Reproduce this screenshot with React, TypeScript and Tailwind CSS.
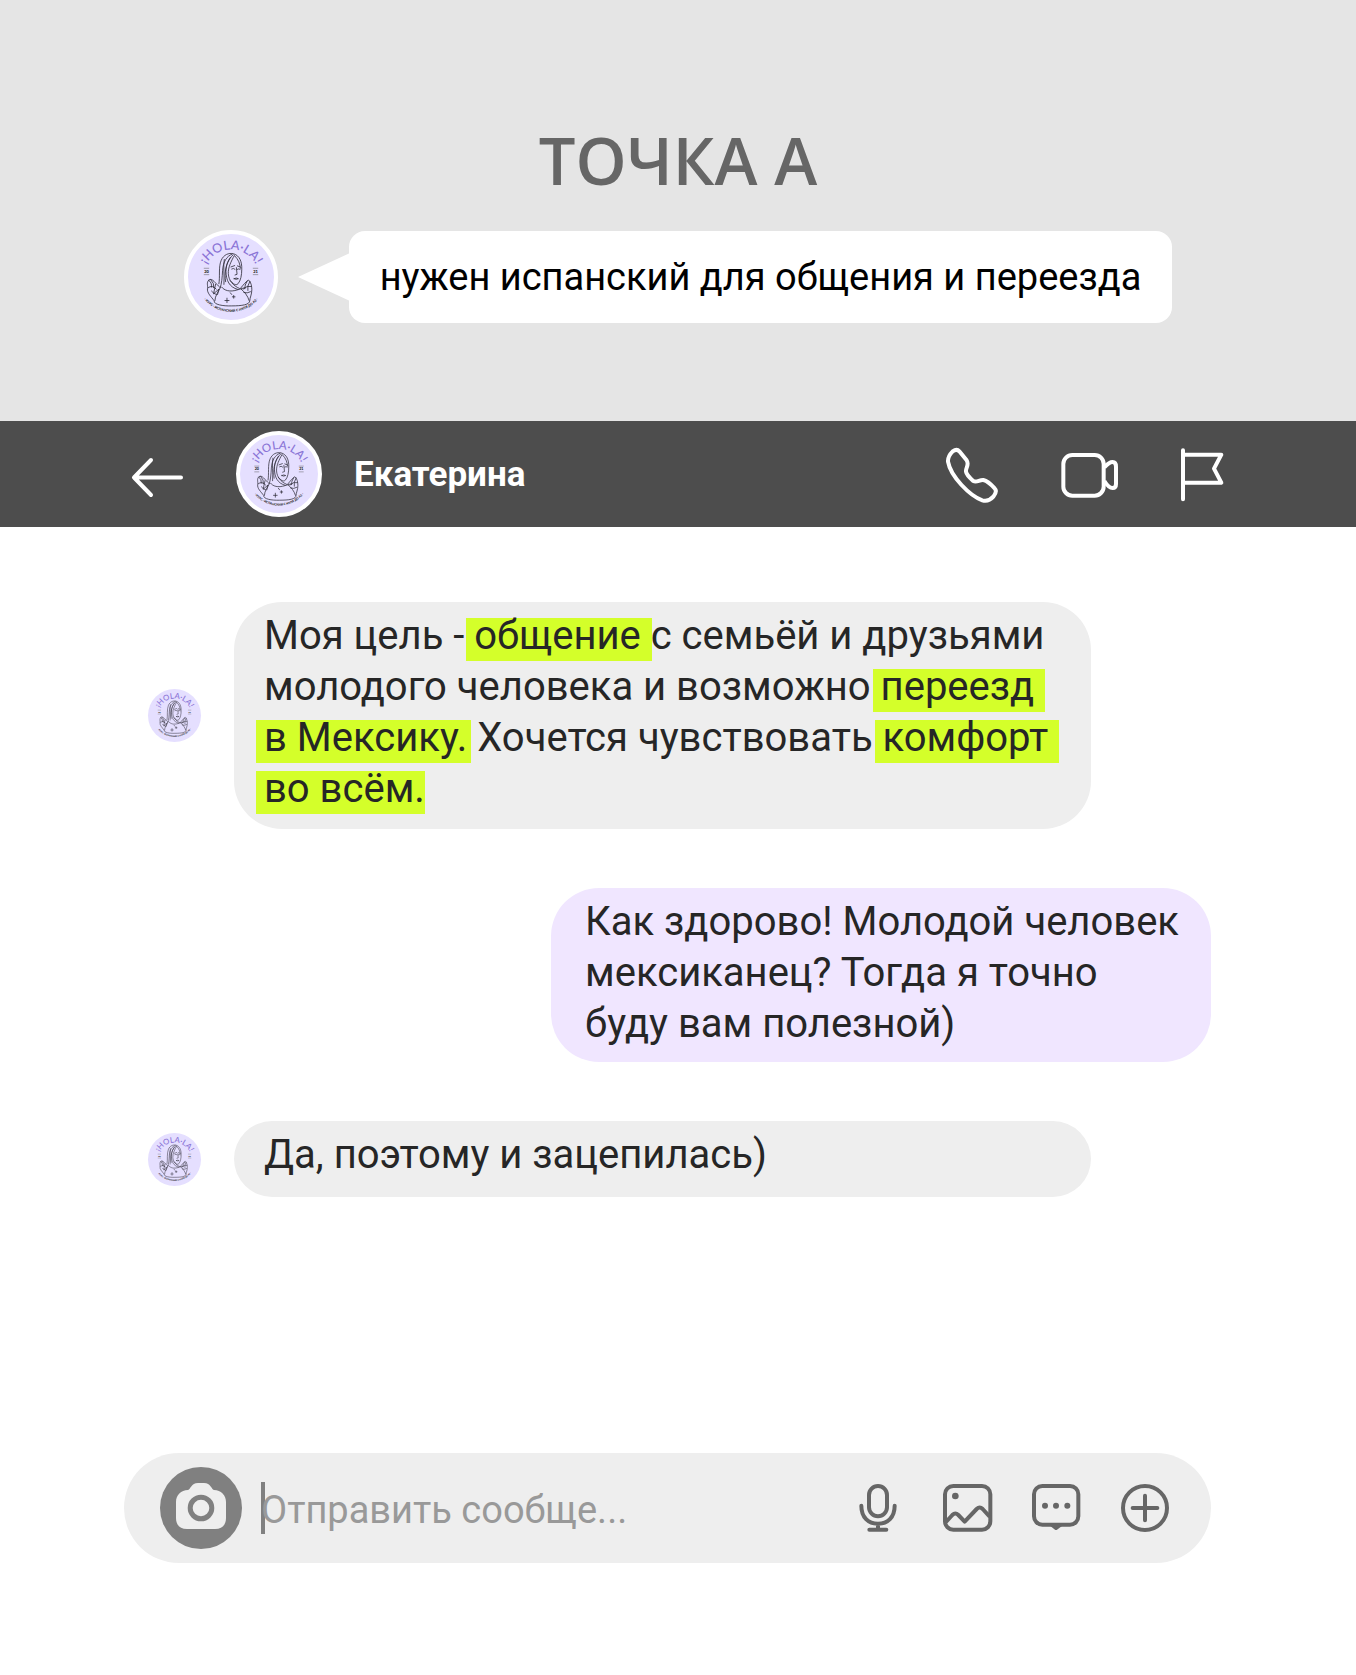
import { useId } from 'react';
import type { ReactNode } from 'react';

interface AvatarProps {
  className?: string;
}

function Avatar({ className = '' }: AvatarProps) {
  const id = useId();

  return (
    <svg viewBox="0 0 256 256" className={`shrink-0 rounded-full bg-[#e5dfff] ${className}`} role="img" aria-label="¡HOLA·LA!">
      <defs>
        <path id={`${id}-top`} d="M46 128 A82 82 0 0 1 210 128" />
        <path id={`${id}-bottom`} d="M24 128 A104 104 0 0 0 232 128" />
      </defs>

      <text fill="#8a74d6" fontSize="38" textAnchor="middle" className="font-['Lato'] font-medium">
        <textPath href={`#${id}-top`} startOffset="50%">¡HOLA·LA!</textPath>
      </text>
      <text fill="#222" fontSize="10" textAnchor="middle" className="font-['Lato'] font-black">
        <textPath href={`#${id}-bottom`} startOffset="50%">· КУРС · ИСПАНСКИЙ С НУЛЯ ДО А2 ·</textPath>
      </text>

      {/* year */}
      <g fill="#222" fontSize="12" textAnchor="middle" className="font-['Lato'] font-black">
        <text x="55" y="116">20</text>
        <text x="201" y="116">21</text>
      </g>
      <path d="M47 102h16M47 121h16M193 102h16M193 121h16" stroke="#555" strokeWidth="1.500" />

      {/* girl */}
      <g fill="none" stroke="#2c2a35" strokeWidth="2.400" strokeLinecap="round" strokeLinejoin="round">
        <path d="M92 148C96 128 90 98 99 78C106 62 121 55 136 59C153 64 161 82 160 105C160 122 157 139 149 148C142 155 134 148 126 139" />
        <path d="M131 60C115 66 105 82 103 108C102 130 100 148 96 160" />
        <path d="M134 62C120 76 113 92 113 112C114 138 122 158 148 165" />
        <path d="M138 64C128 82 119 100 120 118C121 138 134 154 153 162" />
        <path d="M140 66C150 76 155 88 156 102" />
        <path d="M108 76C104 96 109 124 107 150M126 70C112 90 108 116 112 142" />
        <path d="M128 98L139 94M147 95L155 98M130 104Q135 100 140 105M147 105Q151 102 155 105M144 100L146 120L140 122M137 133Q144 129 150 133Q143 137 137 133" />
        <path d="M94 158C82 148 72 129 62 137C54 146 60 153 58 162C56 176 69 186 78 199C76 210 104 215 130 214C160 214 184 211 184 198C184 190 190 180 190 166C190 157 188 142 180 137C172 142 166 150 156 162" />
        <path d="M62 138Q72 145 70 158M68 136Q79 147 77 160M60 160Q72 150 84 164M70 170Q76 178 84 180M82 150L76 178L92 164L88 180" />
        <path d="M176 140Q168 152 169 163M184 141Q175 156 178 168M188 156Q176 152 164 164M166 174Q176 178 186 172" />
        <path d="M96 160C92 170 80 184 80 198M158 164C168 172 178 184 182 198M100 158C108 168 124 174 148 166L168 160" />
        <path d="M116 191V204M110 198H122M136 183V191M132 187H140M126 175L130 180" />
      </g>
    </svg>
  );
}

interface HighlightProps {
  children: ReactNode;
  className?: string;
}

function Highlight({ children, className = '-mr-[11px] pr-[11px]' }: HighlightProps) {
  return (
    <mark className={`-ml-2 inline-block bg-[#d4ff2a] pb-[7px] pl-2 leading-[36px] text-[#262626] ${className}`}>
      {children}
    </mark>
  );
}

function Header() {
  return (
    <header className="flex h-[106px] items-center bg-[#4d4d4d] px-[130px] text-white">
      <button type="button" aria-label="Назад">
        <svg viewBox="0 0 56 48" className="h-12 w-14" fill="none" stroke="currentColor" strokeWidth="4" strokeLinecap="round" strokeLinejoin="round">
          <path d="M51 27.500H4M21 10L4 27.500L21 45" />
        </svg>
      </button>
      <Avatar className="ml-[50px] h-[86px] w-[86px] border-4 border-white" />
      <h2 className="ml-8 pt-0.5 text-[35px] font-bold">Екатерина</h2>

      <div className="ml-auto flex items-center pt-0.5">
        <button type="button" aria-label="Позвонить">
          <svg viewBox="72 108 168 174" className="h-[58px] w-14" fill="none" stroke="currentColor" strokeWidth="12" strokeLinejoin="round">
            <path d="M118 124L140 151C149 164 136 174 138 185C140 196 152 206 160 213C170 219 178 209 190 210C199 212 215 225 224 235C231 242 228 250 220 260C212 269 200 275 187 271C150 258 92 200 84 155C83 141 90 132 98 124C105 119 112 117 118 124Z" />
          </svg>
        </button>
        <button type="button" aria-label="Видеозвонок" className="ml-[60px]">
          <svg viewBox="420 108 180 174" className="h-[58px] w-[60px]" fill="none" stroke="currentColor" strokeWidth="12" strokeLinejoin="round">
            <rect x="430" y="135" width="121" height="122" rx="27" />
            <path d="M553 172C563 161 571 156 578 156C585 156 588 160 588 170V222C588 230 585 234 578 234C570 234 562 228 553 213" />
          </svg>
        </button>
        <button type="button" aria-label="Пожаловаться" className="ml-[60px]">
          <svg viewBox="780 108 138 174" className="h-[58px] w-[46px]" fill="none" stroke="currentColor" strokeWidth="12" strokeLinecap="round" strokeLinejoin="round">
            <path d="M789 121V268M789 134H904L882 176L904 218H789" />
          </svg>
        </button>
      </div>
    </header>
  );
}

function MessageInput() {
  return (
    <form className="flex h-[110px] items-center rounded-full bg-[#eeeeee] pr-10 pl-9 text-[#666666]">
      <button type="button" aria-label="Камера">
        <svg viewBox="0 0 82 82" className="h-[82px] w-[82px]">
          <circle cx="41" cy="41" r="41" fill="#808080" />
          <path d="M28 23C31 22 31 16 38 16H44C51 16 51 22 54 23C61 23 66 28 66 35V51C66 58 62 62 55 62H27C20 62 16 58 16 51V35C16 28 21 23 28 23Z" fill="#eeeeee" />
          <circle cx="41" cy="41" r="10.800" fill="none" stroke="#808080" strokeWidth="5" />
        </svg>
      </button>
      <span className="ml-[19px] h-[52px] w-1 shrink-0 bg-[#808080]" />
      <input
        type="text"
        aria-label="Сообщение"
        placeholder="Отправить сообще..."
        className="-ml-1 min-w-0 flex-1 bg-transparent pt-1 text-[38px] outline-none placeholder:text-[#999999]"
      />

      <div className="flex items-center gap-[37px]">
        <button type="button" aria-label="Голосовое сообщение">
          <svg viewBox="101 126 156 156" className="h-[52px] w-[52px]" fill="none" stroke="currentColor" strokeWidth="12" strokeLinecap="round">
            <rect x="152" y="138" width="54" height="91" rx="27" />
            <path d="M129 197C129 232 150 251 179 251S229 232 229 197M179 251V269M153 269H204" />
          </svg>
        </button>
        <button type="button" aria-label="Фото">
          <svg viewBox="365 126 156 156" className="h-[52px] w-[52px]" fill="none" stroke="currentColor" strokeWidth="12" strokeLinejoin="round">
            <rect x="377" y="138" width="136" height="131" rx="25" />
            <path d="M380 246L399 225Q408 216 417 225L436 245L472 207Q481 198 490 207L511 230" />
            <circle cx="408" cy="168" r="10" fill="currentColor" stroke="none" />
          </svg>
        </button>
        <button type="button" aria-label="Быстрый ответ">
          <svg viewBox="631 126 156 156" className="h-[52px] w-[52px]" fill="none" stroke="currentColor" strokeWidth="12">
            <rect x="643" y="138" width="133" height="116" rx="25" />
            <g fill="currentColor" stroke="none">
              <circle cx="676" cy="197" r="9" />
              <circle cx="709" cy="197" r="9" />
              <circle cx="743" cy="197" r="9" />
              <path d="M692 258L706 269Q709 271 712 269L727 258Z" />
            </g>
          </svg>
        </button>
        <button type="button" aria-label="Добавить">
          <svg viewBox="897 126 156 156" className="h-[52px] w-[52px]" fill="none" stroke="currentColor" strokeWidth="12" strokeLinecap="round">
            <circle cx="975" cy="204" r="66" />
            <path d="M938 204H1012M975 167V241" />
          </svg>
        </button>
      </div>
    </form>
  );
}

export default function App() {
  return (
    <div className="min-h-screen bg-white font-['Roboto',sans-serif]">
      <section className="flex flex-col items-center bg-[#e5e5e5] pt-32 pb-[97px]">
        <h1 className="font-['Open_Sans',sans-serif] text-[65px] leading-[64px] font-semibold text-[#666666]">ТОЧКА А</h1>
        <div className="mt-[38px] flex items-center">
          <Avatar className="h-[94px] w-[94px] border-4 border-white" />
          <svg viewBox="0 0 52 48" className="ml-5 h-12 w-[52px] shrink-0" fill="#fff">
            <path d="M0 24L52 0V48Z" />
          </svg>
          <p className="-ml-px rounded-2xl bg-white px-[31px] py-5 text-[38px] leading-[52px] text-black">
            нужен испанский для общения и переезда
          </p>
        </div>
      </section>

      <Header />

      <main className="pt-[75px] pr-[145px] pb-28 pl-[124px]">
        <div className="flex flex-col gap-[59px] text-[40px] leading-[51px] text-[#262626]">
          <div className="flex items-center gap-[33px] pl-6">
            <Avatar className="h-[53px] w-[53px]" />
            <p className="w-full max-w-[857px] rounded-[48px] bg-[#eeeeee] pt-2 pb-[15px] pl-[30px] whitespace-nowrap">
              Моя цель - <Highlight>общение</Highlight> с семьёй и друзьями
              <br />
              молодого человека и возможно <Highlight>переезд</Highlight>
              <br />
              <Highlight className="-mr-1 pr-1">в Мексику.</Highlight> Хочется чувствовать <Highlight>комфорт</Highlight>
              <br />
              <Highlight className="">во всём.</Highlight>
            </p>
          </div>

          <p className="w-full max-w-[660px] self-end rounded-[48px] bg-[#f0e6ff] pt-2 pb-[13px] pl-[34px] whitespace-nowrap">
            Как здорово! Молодой человек
            <br />
            мексиканец? Тогда я точно
            <br />
            буду вам полезной)
          </p>

          <div className="flex items-center gap-[33px] pl-6">
            <Avatar className="h-[53px] w-[53px]" />
            <p className="w-full max-w-[857px] rounded-[38px] bg-[#eeeeee] pt-2 pb-[17px] pl-[30px]">
              Да, поэтому и зацепилась)
            </p>
          </div>
        </div>

        <div className="mt-64">
          <MessageInput />
        </div>
      </main>
    </div>
  );
}
